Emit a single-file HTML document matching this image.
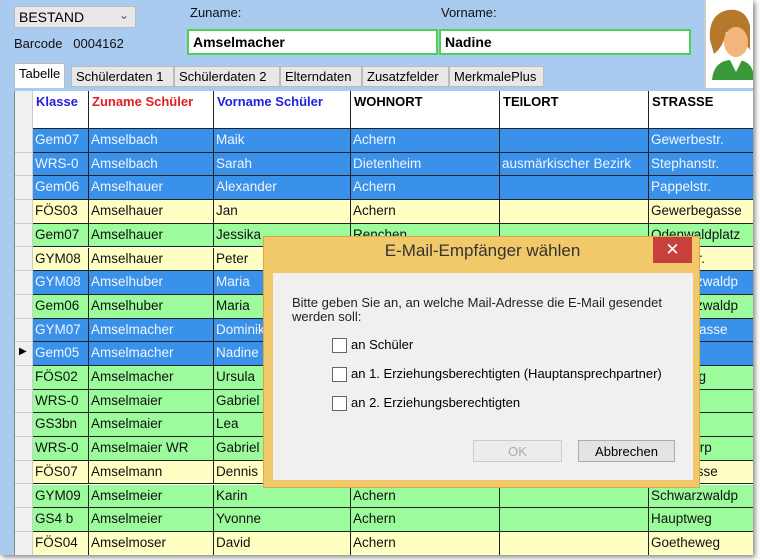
<!DOCTYPE html>
<html><head><meta charset="utf-8"><style>
*{box-sizing:border-box;margin:0;padding:0}
body{width:760px;height:560px;background:#fff;position:relative;overflow:hidden;font-family:"Liberation Sans",sans-serif;}
.win{position:absolute;left:0;top:0;width:753px;height:555px;background:#a9cbf0;box-shadow:2px 2px 5px rgba(0,0,0,.5);overflow:hidden}
.abs{position:absolute}
.combo{left:14px;top:6px;width:122px;height:22px;background:#e8e8e8;border:1px solid #bbb;font-size:14px;padding:2px 4px}
.lbl{font-size:13px;color:#111}
.inp{height:26px;background:#fff;border:2px solid #50d050;font-weight:bold;font-size:14px;padding:3px 4px}
.tab{top:66px;height:21px;background:#e8e8e8;border:1px solid #bbb;font-size:13px;padding:2px 4px;white-space:nowrap}
.grid{left:14px;top:91px;width:739px;height:470px;background:#fff;border-left:1px solid #888}
.rh{position:absolute;left:0;width:18px;background:#f0f0f0}
.row{position:absolute;left:18px;height:23.7px;width:740px;display:flex;border-bottom:1px solid #222}
.c{border-right:1.5px solid #222;font-size:13.5px;padding:3px 2px;overflow:hidden;white-space:nowrap;height:100%}
.w1{width:56px}.w2{width:125px}.w3{width:137px}.w4{width:149px}.w5{width:149px}.w6{width:110px}
.b{background:#3a91e9;color:#eef5ff}.g{background:#9cfc9c;color:#111}.y{background:#ffffc4;color:#111}
.hd{position:absolute;left:18px;top:0;height:38px;display:flex;width:740px;border-bottom:1.5px solid #222}
.hd .c{font-weight:bold;font-size:13px;padding:3px 3px;background:#fff}
.dlg{left:263px;top:236px;width:437px;height:252px;background:#f2c96a;border:1px solid #d9a94a}
.dlgin{left:9px;top:36px;width:420px;height:207px;background:#f0f0f0}
.cb{width:15px;height:15px;background:#fff;border:1px solid #666;display:inline-block;vertical-align:middle;margin-right:4px}
.btn{height:22px;border:1px solid #adadad;background:#e3e3e3;font-size:13px;text-align:center;padding-top:3px}
.rl{position:absolute;left:0;width:18px;height:23.7px;border-bottom:1px solid #ccc}
</style></head><body>
<div class="win">
<div class="abs combo">BESTAND<span style="position:absolute;right:6px;top:1px;font-size:12px;color:#555">&#8964;</span></div>
<div class="abs lbl" style="left:14px;top:36px">Barcode&nbsp;&nbsp;&nbsp;0004162</div>
<div class="abs lbl" style="left:190px;top:5px">Zuname:</div>
<div class="abs lbl" style="left:441px;top:5px">Vorname:</div>
<div class="abs inp" style="left:187px;top:29px;width:251px">Amselmacher</div>
<div class="abs inp" style="left:439px;top:29px;width:252px">Nadine</div>
<div class="abs" style="left:704px;top:0;width:50px;height:88px;background:#fff;border-left:2px solid #ccc">
<svg width="48" height="86" viewBox="0 0 48 86">
<path d="M4 40 Q2 14 22 10 Q40 8 44 26 L44 50 Q36 40 34 30 Q28 34 20 32 Q18 46 8 54 Z" fill="#b5782c"/>
<ellipse cx="30" cy="42" rx="12" ry="15" fill="#f2b67c"/>
<path d="M6 80 Q8 58 30 60 Q48 60 48 80 Z" fill="#3a9a3a"/>
<path d="M24 60 L30 72 L36 60 Z" fill="#fff"/>
</svg></div>
<div class="abs tab" style="left:14px;top:63px;height:25px;background:#fff;border-bottom:none">Tabelle</div>
<div class="abs tab" style="left:71px;width:103px">Schülerdaten 1</div>
<div class="abs tab" style="left:174px;width:106px">Schülerdaten 2</div>
<div class="abs tab" style="left:280px;width:82px">Elterndaten</div>
<div class="abs tab" style="left:362px;width:87px">Zusatzfelder</div>
<div class="abs tab" style="left:449px;width:95px">MerkmalePlus</div>
<div class="abs grid">
<div class="rh" style="top:0;height:470px;border-right:1px solid #ccc"></div>
<div class="hd"><div class="c w1" style="color:#2020e0">Klasse</div><div class="c w2" style="color:#e02020">Zuname Schüler</div><div class="c w3" style="color:#2020e0">Vorname Schüler</div><div class="c w4">WOHNORT</div><div class="c w5">TEILORT</div><div class="c w6">STRASSE</div></div>
<div style="position:absolute;left:0;top:38px;width:760px">
<div class="rl" style="top:0"></div><div class="rl" style="top:23.7px"></div><div class="rl" style="top:47.4px"></div><div class="rl" style="top:71.1px"></div><div class="rl" style="top:94.8px"></div><div class="rl" style="top:118.5px"></div><div class="rl" style="top:142.2px"></div><div class="rl" style="top:165.9px"></div><div class="rl" style="top:189.6px"></div><div class="rl" style="top:213.3px"></div><div class="rl" style="top:237px"></div><div class="rl" style="top:260.7px"></div><div class="rl" style="top:284.4px"></div><div class="rl" style="top:308.1px"></div><div class="rl" style="top:331.8px"></div><div class="rl" style="top:355.5px"></div><div class="rl" style="top:379.2px"></div><div class="rl" style="top:402.9px"></div>
<div class="row b" style="top:0"><div class="c w1">Gem07</div><div class="c w2">Amselbach</div><div class="c w3">Maik</div><div class="c w4">Achern</div><div class="c w5"></div><div class="c w6">Gewerbestr.</div></div>
<div class="row b" style="top:23.7px"><div class="c w1">WRS-0</div><div class="c w2">Amselbach</div><div class="c w3">Sarah</div><div class="c w4">Dietenheim</div><div class="c w5">ausmärkischer Bezirk</div><div class="c w6">Stephanstr.</div></div>
<div class="row b" style="top:47.4px"><div class="c w1">Gem06</div><div class="c w2">Amselhauer</div><div class="c w3">Alexander</div><div class="c w4">Achern</div><div class="c w5"></div><div class="c w6">Pappelstr.</div></div>
<div class="row y" style="top:71.1px"><div class="c w1">FÖS03</div><div class="c w2">Amselhauer</div><div class="c w3">Jan</div><div class="c w4">Achern</div><div class="c w5"></div><div class="c w6">Gewerbegasse</div></div>
<div class="row g" style="top:94.8px"><div class="c w1">Gem07</div><div class="c w2">Amselhauer</div><div class="c w3">Jessika</div><div class="c w4">Renchen</div><div class="c w5"></div><div class="c w6">Odenwaldplatz</div></div>
<div class="row y" style="top:118.5px"><div class="c w1">GYM08</div><div class="c w2">Amselhauer</div><div class="c w3">Peter</div><div class="c w4"></div><div class="c w5"></div><div class="c w6">Hauptstr.</div></div>
<div class="row b" style="top:142.2px"><div class="c w1">GYM08</div><div class="c w2">Amselhuber</div><div class="c w3">Maria</div><div class="c w4"></div><div class="c w5"></div><div class="c w6">Schwarzwaldp</div></div>
<div class="row g" style="top:165.9px"><div class="c w1">Gem06</div><div class="c w2">Amselhuber</div><div class="c w3">Maria</div><div class="c w4"></div><div class="c w5"></div><div class="c w6">Schwarzwaldp</div></div>
<div class="row b" style="top:189.6px"><div class="c w1">GYM07</div><div class="c w2">Amselmacher</div><div class="c w3">Dominik</div><div class="c w4"></div><div class="c w5"></div><div class="c w6">Lindengasse</div></div>
<div class="row b" style="top:213.3px"><div class="c w1">Gem05</div><div class="c w2">Amselmacher</div><div class="c w3">Nadine</div><div class="c w4"></div><div class="c w5"></div><div class="c w6">Bahnstr.</div></div>
<div class="row g" style="top:237px"><div class="c w1">FÖS02</div><div class="c w2">Amselmacher</div><div class="c w3">Ursula</div><div class="c w4"></div><div class="c w5"></div><div class="c w6">Waldweg</div></div>
<div class="row g" style="top:260.7px"><div class="c w1">WRS-0</div><div class="c w2">Amselmaier</div><div class="c w3">Gabriel</div><div class="c w4"></div><div class="c w5"></div><div class="c w6">Torplatz</div></div>
<div class="row g" style="top:284.4px"><div class="c w1">GS3bn</div><div class="c w2">Amselmaier</div><div class="c w3">Lea</div><div class="c w4"></div><div class="c w5"></div><div class="c w6">Weg</div></div>
<div class="row g" style="top:308.1px"><div class="c w1">WRS-0</div><div class="c w2">Amselmaier WR</div><div class="c w3">Gabriel</div><div class="c w4"></div><div class="c w5"></div><div class="c w6">Mercatorp</div></div>
<div class="row y" style="top:331.8px"><div class="c w1">FÖS07</div><div class="c w2">Amselmann</div><div class="c w3">Dennis</div><div class="c w4"></div><div class="c w5"></div><div class="c w6">Kirchgasse</div></div>
<div class="row g" style="top:355.5px"><div class="c w1">GYM09</div><div class="c w2">Amselmeier</div><div class="c w3">Karin</div><div class="c w4">Achern</div><div class="c w5"></div><div class="c w6">Schwarzwaldp</div></div>
<div class="row g" style="top:379.2px"><div class="c w1">GS4 b</div><div class="c w2">Amselmeier</div><div class="c w3">Yvonne</div><div class="c w4">Achern</div><div class="c w5"></div><div class="c w6">Hauptweg</div></div>
<div class="row y" style="top:402.9px"><div class="c w1">FÖS04</div><div class="c w2">Amselmoser</div><div class="c w3">David</div><div class="c w4">Achern</div><div class="c w5"></div><div class="c w6">Goetheweg</div></div>
<div style="position:absolute;left:4px;top:217px;font-size:10px">&#9654;</div>
</div>
</div>
<div class="abs dlg">
<div class="abs" style="left:0;top:4px;width:437px;text-align:center;font-size:17px;color:#333">E-Mail-Empfänger wählen</div>
<div class="abs" style="left:389px;top:0;width:39px;height:26px;background:#c7403c;color:#fff;text-align:center;font-size:17px;line-height:25px">&#10005;</div>
<div class="abs dlgin">
<div class="abs" style="left:19px;top:23px;font-size:13px;line-height:14px;color:#222;width:400px">Bitte geben Sie an, an welche Mail-Adresse die E-Mail gesendet werden soll:</div>
<div class="abs" style="left:59px;top:64px;font-size:13px"><span class="cb"></span>an Schüler</div>
<div class="abs" style="left:59px;top:93px;font-size:13px"><span class="cb"></span>an 1. Erziehungsberechtigten (Hauptansprechpartner)</div>
<div class="abs" style="left:59px;top:122px;font-size:13px"><span class="cb"></span>an 2. Erziehungsberechtigten</div>
<div class="abs btn" style="left:200px;top:167px;width:89px;color:#aaa;border-color:#ccc;background:#ececec">OK</div>
<div class="abs btn" style="left:305px;top:167px;width:97px">Abbrechen</div>
</div>
</div>
</div>
</body></html>
